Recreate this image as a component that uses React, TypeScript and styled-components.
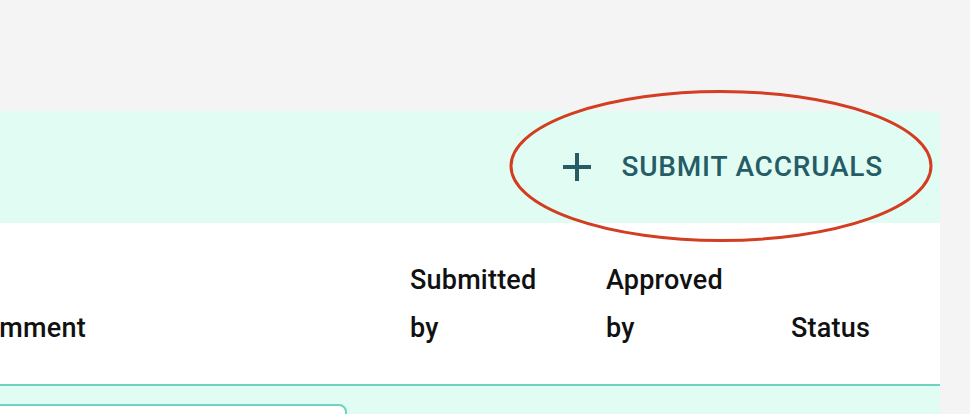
import React from "react";
import styled, { createGlobalStyle } from "styled-components";

const Global = createGlobalStyle`
  html, body { margin: 0; padding: 0; background: #f4f4f4; overflow: hidden; }
  body { font-family: Roboto, "Liberation Sans", Arial, sans-serif; }
  * { box-sizing: border-box; }
`;

const Page = styled.div`
  position: relative;
  width: 970px;
  height: 414px;
  padding: 111px 30px 0 0;
  display: flex;
  align-items: flex-start;
  overflow: hidden;
`;

const Panel = styled.section`
  flex: 1;
  margin-left: -66px;
  background: #ffffff;
  border-top-right-radius: 6px;
  overflow: hidden;
  display: flex;
  flex-direction: column;
`;

const Toolbar = styled.div`
  flex-shrink: 0;
  height: 112px;
  background: #e1fdf3;
  display: flex;
  align-items: center;
  justify-content: flex-end;
  padding-right: 57px;
`;

const ActionButton = styled.button`
  display: flex;
  align-items: center;
  gap: 20px;
  border: none;
  background: transparent;
  padding: 0;
  cursor: pointer;
  color: #265c66;
  font-family: Roboto, "Liberation Sans", Arial, sans-serif;
  font-weight: 500;
  font-size: 28px;
  letter-spacing: 0.8px;
  text-transform: uppercase;
  line-height: 48px;
`;

const Table = styled.table`
  width: 100%;
  border-collapse: collapse;
  table-layout: fixed;
`;

const HeadCell = styled.th<{ $w: number }>`
  width: ${(p) => p.$w}px;
  padding: 32px;
  text-align: left;
  vertical-align: bottom;
  font-family: Roboto, "Liberation Sans", Arial, sans-serif;
  font-weight: 500;
  font-size: 27px;
  line-height: 48px;
  letter-spacing: 0.2px;
  color: #111111;
  border-bottom: 2px solid #6fd3c1;
  height: 162px;
`;

const BodyRow = styled.tr`
  background: #e1fdf3;
`;

const BodyCell = styled.td`
  padding: 18px 31px 0 32px;
  vertical-align: top;
`;

const CommentInput = styled.div`
  height: 80px;
  background: #ffffff;
  border: 2px solid #6fd3c1;
  border-radius: 8px;
`;

const Annotation = styled.svg`
  position: absolute;
  left: 509px;
  top: 89px;
  pointer-events: none;
`;

const PlusIcon = () => (
  <svg width="48" height="48" viewBox="0 0 24 24" fill="currentColor" aria-hidden>
    <path d="M19 13h-6v6h-2v-6H5v-2h6V5h2v6h6v2z" />
  </svg>
);

const columns = [
  { label: "Comment", w: 444 },
  { label: "Submitted by", w: 196 },
  { label: "Approved by", w: 185 },
  { label: "Status", w: 181 },
];

export default function App() {
  return (
    <>
      <Global />
      <Page>
        <Panel>
          <Toolbar>
            <ActionButton>
              <PlusIcon />
              Submit accruals
            </ActionButton>
          </Toolbar>
          <Table>
            <thead>
              <tr>
                {columns.map((c) => (
                  <HeadCell key={c.label} $w={c.w}>
                    {c.label}
                  </HeadCell>
                ))}
              </tr>
            </thead>
            <tbody>
              <BodyRow>
                <BodyCell>
                  <CommentInput />
                </BodyCell>
                <BodyCell />
                <BodyCell />
                <BodyCell />
              </BodyRow>
            </tbody>
          </Table>
        </Panel>
        <Annotation width="424" height="154" viewBox="0 0 424 154">
          <ellipse cx="212" cy="77" rx="210" ry="74.5" fill="none" stroke="#d33d22" strokeWidth="3" />
        </Annotation>
      </Page>
    </>
  );
}
